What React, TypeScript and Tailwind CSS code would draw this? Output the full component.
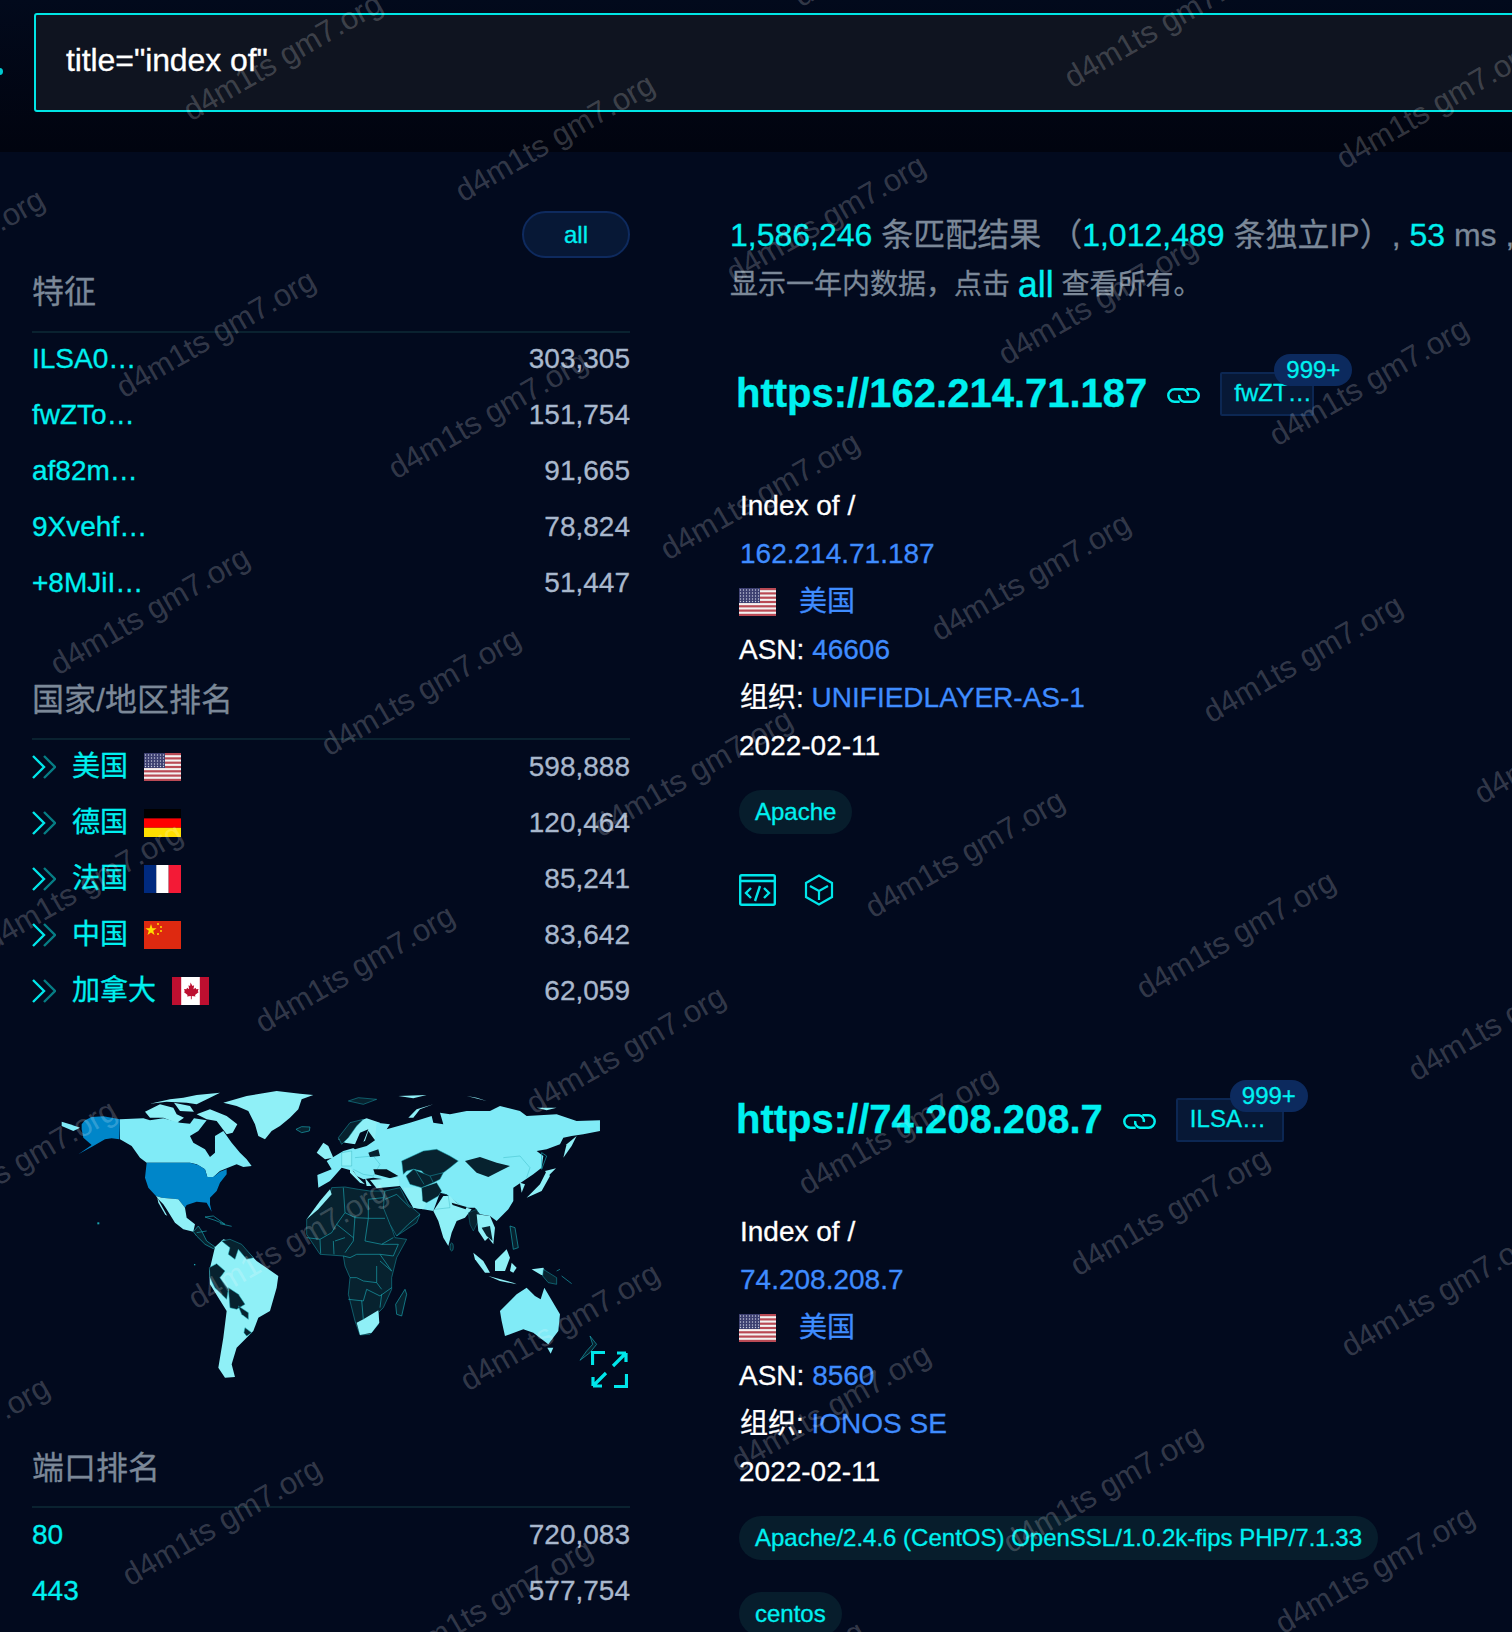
import React from "react";

const CY = "text-[#00f0f0]";

function Flag({ c }: { c: string }) {
  const cls = "w-[37px] h-[28px] shrink-0 block";
  if (c === "us")
    return (
      <svg viewBox="0 0 37 28" className={cls}>
        <rect width="37" height="28" fill="#f3f3f3" />
        {[0, 4.3, 8.6, 12.9, 17.2, 21.5, 25.8].map((y) => (
          <rect key={y} y={y} width="37" height="2.2" fill="#b94a55" />
        ))}
        <rect width="21" height="15" fill="#3c3f70" />
        {[2, 5, 8, 11, 14, 17, 20].map((x) =>
          [2, 5, 8, 11, 13.5].map((y) => <circle key={x + "-" + y} cx={x - 0.5} cy={y} r="0.7" fill="#c9cde0" />)
        )}
      </svg>
    );
  if (c === "de")
    return (
      <svg viewBox="0 0 37 28" className={cls}>
        <rect width="37" height="9.4" fill="#000" />
        <rect y="9.4" width="37" height="9.4" fill="#f00" />
        <rect y="18.8" width="37" height="9.2" fill="#ffdf00" />
      </svg>
    );
  if (c === "fr")
    return (
      <svg viewBox="0 0 37 28" className={cls}>
        <rect width="12.3" height="28" fill="#002a7f" />
        <rect x="12.3" width="12.4" height="28" fill="#fff" />
        <rect x="24.7" width="12.3" height="28" fill="#f31a36" />
      </svg>
    );
  if (c === "cn")
    return (
      <svg viewBox="0 0 37 28" className={cls}>
        <rect width="37" height="28" fill="#de2910" />
        <polygon points="7,3 8.4,7.2 12.6,7.2 9.2,9.8 10.5,14 7,11.4 3.5,14 4.8,9.8 1.4,7.2 5.6,7.2" fill="#ffde00" />
        <circle cx="14" cy="3" r="1" fill="#ffde00" />
        <circle cx="17" cy="6" r="1" fill="#ffde00" />
        <circle cx="17" cy="10" r="1" fill="#ffde00" />
        <circle cx="14" cy="13" r="1" fill="#ffde00" />
      </svg>
    );
  return (
    <svg viewBox="0 0 37 28" className={cls}>
      <rect width="37" height="28" fill="#fff" />
      <rect width="9.2" height="28" fill="#bd0f30" />
      <rect x="27.8" width="9.2" height="28" fill="#bd0f30" />
      <path d="M18.5 5.5l2 3.4 1.6-.6-.6 4 2-1.6.7 1.6 2.3-.3-.7 2.4 1 .6-3.8 3.1.5 1.5-3.7-.6-.1 3.2h-.8l-.1-3.2-3.7.6.5-1.5-3.8-3.1 1-.6-.7-2.4 2.3.3.7-1.6 2 1.6-.6-4 1.6.6z" fill="#bd0f30" />
    </svg>
  );
}

function Chevrons() {
  return (
    <svg viewBox="0 0 24 24" className="w-[24px] h-[24px] shrink-0 block" fill="none" strokeWidth="2.4">
      <path d="M1 1 L12 12 L1 23" stroke="#00e6ea" />
      <path d="M12 1 L23 12 L12 23" stroke="#067d84" />
    </svg>
  );
}

function LinkIcon() {
  return (
    <svg viewBox="0 0 34 20" className="w-[33px] h-[19px] block" fill="none" stroke="#00f0f0" strokeWidth="2.6">
      <path d="M13 16.500H7.500a6.500 6.500 0 0 1 0-13h9a6 6 0 0 1 5 7" />
      <path d="M20 3.500h6.500a6.500 6.500 0 0 1 0 13h-9a6 6 0 0 1-5-7" />
    </svg>
  );
}

function CodeIcon() {
  return (
    <svg viewBox="0 0 37 32" className="w-[37px] h-[32px] block" fill="none" stroke="#00e6ea" strokeWidth="2.4">
      <rect x="1.200" y="1.200" width="34.600" height="29.600" rx="1.500" />
      <path d="M1 7h35" />
      <path d="M12 14l-5 5 5 5M25 14l5 5-5 5M21 12l-5 15" />
    </svg>
  );
}

function CubeIcon() {
  return (
    <svg viewBox="0 0 30 32" className="w-[30px] h-[32px] block" fill="none" stroke="#00e6ea" strokeWidth="2.2">
      <path d="M15 1.500L28 9v14l-13 7.500L2 23V9z" />
      <path d="M6 12l9 5 9-5M15 17v9" />
    </svg>
  );
}

function ExpandIcon() {
  return (
    <svg viewBox="0 0 37 37" className="w-[37px] h-[37px] block" fill="none" stroke="#00e6ea" strokeWidth="3.2">
      <path d="M1.500 14V1.500H14M23 35.500h12.500V23" />
      <path d="M22 15L35 2M35 2h-9M35 2v9" />
      <path d="M15 22L2 35M2 35h9M2 35v-9" />
    </svg>
  );
}

const L1 = "#8ff0f7";
const L2 = "#80ebf7";
const DK = "#07222f";
const BD = "#1aa4b0";
const US = "#0086c9";

function P({ d, f = L1, s = "none", w = 0 }: { d: string; f?: string; s?: string; w?: number }) {
  return <path d={d} fill={f} stroke={s} strokeWidth={w} strokeLinejoin="round" />;
}

function WorldMap() {
  return (
    <svg viewBox="32 1070 598 320" className="w-[598px] h-[320px] block overflow-visible">
      <g transform="translate(50 1080) scale(0.3333)">
        <P f={L1} d="M285,92 L330,70 L370,80 L380,100 L402,110 L380,126 L340,110 L300,110Z" />
        <P f={L1} d="M300,68 L360,55 L400,50 L440,42 L510,35 L480,50 L440,70 L410,65 L350,62Z" />
        <P f={L1} d="M372,65 L420,75 L432,92 L390,90Z" />
        <P f={L1} d="M440,100 L480,85 L530,105 L562,130 L548,155 L530,160 L500,120 L470,115Z" />
        <P f={L2} d="M210,115 L280,112 L300,118 L340,112 L390,125 L420,128 L432,112 L470,118 L445,150 L420,165 L430,185 L465,205 L480,228 L495,215 L495,165 L520,150 L545,185 L570,215 L590,235 L605,255 L580,258 L560,250 L530,262 L510,270 L490,288 L472,288 L465,265 L440,250 L420,245 L290,245 L270,230 L245,195 L210,175Z" />
        <P f={L1} d="M520,65 L590,45 L680,30 L750,38 L790,42 L755,55 L745,85 L720,110 L690,135 L665,150 L645,175 L625,165 L615,130 L595,90 L560,75Z" />
        <P f={DK} s={BD} w={2} d="M738,145 L755,137 L780,138 L778,150 L755,155Z" />
        <P f={US} d="M290,245 L420,245 L445,252 L465,265 L472,288 L490,288 L510,272 L530,265 L530,280 L510,305 L500,330 L480,350 L480,370 L485,392 L470,365 L440,362 L410,372 L405,380 L385,355 L335,350 L318,345 L295,320 L285,290Z" />
        <P f={L2} d="M35,122 L60,130 L90,140 L70,150 L35,135Z" />
        <P f={US} d="M95,130 L105,118 L125,108 L160,106 L210,115 L208,175 L185,172 L165,175 L130,195 L85,220 L125,192 L100,170 L95,145Z" />
        <P f={L1} d="M318,345 L335,350 L385,355 L405,380 L410,410 L435,430 L430,452 L400,445 L375,425 L350,385 L340,370 L325,355Z" />
        <P f={L1} d="M322,350 L352,405 L345,400 L325,365Z" />
        <P f={DK} s={BD} w={2} d="M430,452 L445,435 L455,450 L470,480 L495,498 L490,503 L465,490 L440,465Z" />
        <P f="none" s={BD} w={2} d="M465,408 L490,405 L525,430 L495,418Z M510,428 L545,436 M440,455 L470,450" />
        <P f={L1} d="M495,498 L520,475 L570,490 L620,540 L685,585 L680,620 L660,690 L625,710 L610,750 L590,770 L560,800 L545,850 L555,888 L525,890 L505,860 L520,770 L530,690 L480,610 L478,570Z" />
        <P f={DK} s={BD} w={1.5} d="M515,480 L540,475 L575,490 L610,530 L590,535 L565,505 L555,535 L535,520 L540,500Z" />
        <P f={DK} s={BD} w={1.5} d="M478,560 L500,548 L525,570 L510,590 L535,625 L530,655 L495,620 L480,590Z" />
        <P f={DK} s={BD} w={1.5} d="M535,620 L565,640 L585,670 L560,685 L540,680Z" />
        <P f={DK} s={BD} w={1.5} d="M565,675 L595,695 L595,715 L575,700Z" />
        <P f={DK} s={BD} w={1.5} d="M585,740 L605,755 L590,765 L582,755Z" />
        <rect x="142" y="424" width="6" height="6" fill={BD} />
        <rect x="432" y="549" width="4" height="4" fill={BD} />
      </g>
      <g transform="translate(300 1080) scale(0.3333)">
        <P f={L1} d="M50,215 L70,185 L85,195 L100,230 L75,235Z" />
        <P f={L1} d="M115,175 L150,130 L200,112 L240,125 L230,170 L220,180 L185,195 L195,170 L205,145 L180,155 L165,190 L135,185Z" />
        <P f={DK} s={BD} w={1.5} d="M115,170 L150,125 L190,115 L170,135 L145,170 L125,190Z" />
        <P f={L2} d="M230,125 L270,130 L260,145 L330,125 L395,105 L400,125 L430,130 L420,95 L450,100 L500,90 L570,90 L600,75 L660,90 L680,105 L770,100 L830,120 L900,118 L900,150 L850,160 L815,165 L790,170 L780,190 L740,205 L710,210 L730,225 L725,260 L700,280 L670,300 L640,320 L640,360 L625,385 L590,420 L570,405 L540,400 L525,380 L495,380 L470,365 L440,340 L420,335 L400,390 L370,385 L340,380 L310,330 L290,300 L250,295 L220,290 L190,295 L170,285 L160,270 L125,260 L90,300 L55,320 L52,282 L95,265 L80,240 L130,210 L200,190 L225,175Z" />
        <P f={L1} d="M310,320 L370,318 L368,360 L380,365 L370,385 L340,380Z" />
        <P f={L1} d="M400,390 L430,345 L450,345 L470,365 L500,380 L515,385 L495,410 L470,420 L455,455 L445,495 L430,470 L415,420Z" />
        <P f="#04101c" d="M455,365 L500,378 L497,385 L458,372Z" />
        <P f={L1} d="M150,258 L175,290 L195,310 L180,305 L150,275Z" />
        <P f={L1} d="M195,290 L215,315 L200,315Z" />
        <P f={L1} d="M125,215 L155,210 L155,255 L125,255Z" />
        <P f="none" s={BD} w={1} d="M125,215 L155,210 L155,255 L125,255Z M165,230 L220,225 L240,250 L220,285 L190,280 L160,265 M610,230 L660,225 L690,260 L680,290 M425,335 L445,345 L450,380 L405,385" />
        <P f="#04101f" d="M150,195 L195,180 L205,150 L225,178 L200,195 L165,205Z" />
        <P f={DK} d="M205,215 L235,205 L240,225 L210,228Z" />
        <P f="#04101c" d="M220,265 L260,265 L295,285 L270,292 L225,280Z" />
        <P f={DK} s={BD} w={1.5} d="M305,240 L370,210 L410,205 L450,225 L475,240 L450,260 L430,275 L400,290 L390,300 L365,270 L340,265 L320,270 L310,280Z" />
        <P f={DK} d="M495,240 L540,228 L590,245 L630,255 L600,270 L565,288 L530,275Z" />
        <P f={DK} s={BD} w={1.5} d="M318,285 L340,265 L390,285 L430,275 L420,295 L400,305 L365,320 L330,310Z M345,265 L372,310 M390,285 L400,305" />
        <P f={DK} s={BD} w={1} d="M365,320 L410,305 L425,330 L415,345 L380,365 L368,360Z" />
        <P f={L1} d="M210,297 L295,290 L300,315 L230,322Z" />
        <P f={DK} s={BD} w={1.5} d="M95,320 L135,318 L175,325 L210,330 L255,330 L250,350 L262,405 L285,470 L320,475 L290,530 L275,590 L275,625 L250,680 L235,695 L235,730 L210,760 L180,762 L165,720 L145,640 L150,590 L135,555 L130,525 L60,520 L20,460 L20,415 L55,375 L90,340Z" />
        <P f={DK} s={BD} w={1.5} d="M255,330 L300,320 L325,370 L360,400 L350,425 L290,465 L270,430 L250,380Z" />
        <P f={L1} d="M20,415 L60,360 L90,325 L95,340 L55,385Z" />
        <P f={L1} d="M170,725 L190,715 L235,688 L238,725 L215,755 L180,762Z" />
        <path
          d="M130,320 L135,395 L165,410 L205,412 L205,355 M205,412 L255,412 M165,405 L160,480 L135,515 M205,412 L195,480 L245,490 L280,470 M110,430 L95,455 L60,475 L20,470 M110,430 L135,395 M110,430 L160,470 M130,525 L150,530 L170,520 L240,520 L275,570 L240,540 M150,590 L170,590 L190,600 L230,605 L230,555 M145,655 L190,660 L200,625 L240,645 L275,620 M230,605 L245,625 M185,658 L190,715 M245,640 L240,680 M240,520 L280,525 L295,490 L245,490 M60,475 L62,518 M100,480 L102,520 M135,470 L105,480 M255,355 L290,340 L330,380 M290,465 L325,430 L360,400 M205,355 L250,350"
          fill="none"
          stroke={BD}
          strokeWidth="2"
        />
        <P f={DK} s={BD} w={2} d="M315,625 L320,640 L305,705 L290,700 L287,670Z" />
        <ellipse cx="455" cy="498" rx="5" ry="12" fill={DK} stroke={BD} strokeWidth="1.5" />
        <P f={DK} s={BD} w={1} d="M505,395 L530,385 L540,410 L520,450 L510,430Z" />
        <P f={L1} d="M530,400 L570,405 L585,440 L580,490 L565,470 L555,480 L535,450Z" />
        <P f={DK} d="M545,440 L570,435 L578,480 L560,465Z" />
        <P f={L1} d="M520,515 L550,540 L570,575 L555,575 L525,535Z" />
        <P f={L1} d="M565,585 L640,605 L650,610 L600,600Z" />
        <P f={L1} d="M585,540 L620,505 L630,530 L615,570 L585,570Z" />
        <P f={L1} d="M635,545 L650,560 L640,575 L630,570Z" />
        <P f={DK} s={BD} w={2} d="M630,435 L645,440 L655,500 L640,505Z" />
        <P f={L1} d="M695,565 L730,560 L745,590 L720,580Z" />
        <P f={DK} s={BD} w={1.5} d="M730,565 L770,590 L770,610 L745,605 L728,585Z" />
        <path d="M770,570 L780,565 M785,585 L815,608" stroke={BD} strokeWidth="2" fill="none" />
        <P f={L1} d="M680,350 L720,310 L740,270 L750,285 L725,330Z" />
        <P f={L1} d="M735,270 L768,262 L745,285Z" />
        <P f={L1} d="M660,305 L675,310 L665,335Z" />
        <P f="none" s={BD} w={2} d="M725,215 L740,225 L725,265Z" />
        <P f={L1} d="M790,230 L800,190 L830,165 L815,195Z" />
        <P f={L1} d="M325,110 L350,85 L400,70 L360,85 L340,110Z" />
        <P f={DK} s={BD} w={1.5} d="M145,60 L175,50 L230,55 L190,70Z" />
        <P f={L1} d="M295,45 L380,42 L340,52Z" />
        <P f={L1} d="M500,45 L560,60 L530,50Z" />
        <P f={L1} d="M710,80 L770,80 L740,88Z" />
        <P f={L2} d="M600,690 L650,640 L680,620 L705,645 L722,655 L733,620 L780,700 L775,750 L745,790 L700,755 L670,745 L615,765 L605,720Z" />
        <P f={L2} d="M742,800 L760,800 L752,818Z" />
        <P f={DK} s={BD} w={2} d="M870,765 L890,790 L870,815 L840,838 L860,810 L878,790Z" />
      </g>
    </svg>
  );
}

function SectionHead({ t, className }: { t: string; className: string }) {
  return <div className={"text-[32px] leading-[44px] text-[#7b8898] " + className}>{t}</div>;
}

function NameRow({ name, n }: { name: string; n: string }) {
  return (
    <div className="flex justify-between items-center h-[56px] text-[28px]">
      <span className={CY}>{name}</span>
      <span className="text-[#a9b8cd]">{n}</span>
    </div>
  );
}

function CountryRow({ name, c, n }: { name: string; c: string; n: string }) {
  return (
    <div className="flex justify-between items-center h-[56px] text-[28px]">
      <div className="flex items-center">
        <Chevrons />
        <span className={CY + " ml-[16px]"}>{name}</span>
        <span className="ml-[16px]">
          <Flag c={c} />
        </span>
      </div>
      <span className="text-[#a9b8cd]">{n}</span>
    </div>
  );
}

function Pill({ t }: { t: string }) {
  return (
    <div className={"inline-flex items-center h-[44px] rounded-[22px] bg-[#071d2c] px-[16px] text-[24px] whitespace-nowrap " + CY}>
      {t}
    </div>
  );
}

function Result({
  url,
  tag,
  ip,
  asn,
  org,
  children,
  tagW,
}: {
  url: string;
  tag: string;
  ip: string;
  asn: string;
  org: string;
  tagW: string;
  children: React.ReactNode;
}) {
  const link = "text-[#3f8cff]";
  return (
    <div>
      <div className="flex items-center h-[48px] pl-[6px]">
        <span className={"text-[40px] font-bold whitespace-nowrap " + CY}>{url}</span>
        <span className="ml-[20px] mt-[4px]">
          <LinkIcon />
        </span>
        <div className="relative ml-[20px] mt-[2px]">
          <div className={"flex items-center h-[44px] rounded-[2px] border-2 border-[#0c2753] bg-[#071836] pl-[12px] pb-[2px] text-[24px] " + tagW + " " + CY}>
            {tag}
          </div>
          <div className={"absolute left-[54px] -top-[18px] flex items-center justify-center w-[78px] h-[32px] rounded-[16px] bg-[#0c2a5e] text-[24px] " + CY}>
            999+
          </div>
        </div>
      </div>
      <div className="mt-[65px] pl-[9px] text-[28px] text-white">
        <div className="h-[48px] flex items-center pl-[1px]">Index of /</div>
        <div className={"h-[48px] flex items-center pl-[1px] " + link}>{ip}</div>
        <div className={"h-[48px] flex items-center " + link}>
          <Flag c="us" />
          <span className="ml-[23px]">美国</span>
        </div>
        <div className="h-[48px] flex items-center whitespace-pre">
          ASN: <span className={link}>{asn}</span>
        </div>
        <div className="h-[48px] flex items-center pl-[1px] whitespace-pre">
          组织: <span className={link}>{org}</span>
        </div>
        <div className="h-[48px] flex items-center">2022-02-11</div>
        {children}
      </div>
    </div>
  );
}

function Watermarks() {
  const items: { x: number; y: number }[] = [];
  for (let r = -2; r <= 7; r++) {
    for (let k = -3; k <= 8; k++) {
      const x = 283 + k * 271.6 - r * 66.6;
      const y = 57 + k * 81.2 + r * 276.8;
      if (x > -200 && x < 1720 && y > -120 && y < 1760) items.push({ x, y });
    }
  }
  return (
    <div className="absolute inset-0 overflow-hidden pointer-events-none [-webkit-text-stroke:0]">
      {items.map((p, i) => (
        <div
          key={i}
          className="absolute w-[300px] h-[40px] -ml-[150px] -mt-[20px] flex items-center justify-center text-[31px] leading-[40px] text-white/20 -rotate-[30deg] whitespace-nowrap"
          style={{ left: p.x, top: p.y }}
        >
          d4m1ts gm7.org
        </div>
      ))}
    </div>
  );
}

export default function App() {
  return (
    <div className="relative w-[1512px] h-[1632px] overflow-hidden bg-[#020a1e] [-webkit-text-stroke:0.3px] [font-family:'Liberation_Sans','Noto_Sans_CJK_SC',sans-serif]">
      <header className="relative h-[152px] bg-linear-to-b from-[#020a1c] to-[#01040f] pt-[13px] pl-[34px]">
        <div className="absolute -left-[4px] top-[68px] w-[7px] h-[7px] rounded-full bg-[#00c8d0]" />
        <div className="flex items-center w-[1600px] h-[99px] rounded-[3px] border-2 border-[#00e6e6] bg-[#0f1420] pl-[30px] pb-[6px] text-[32px] tracking-[-0.1px] text-white">
          title="index of"
        </div>
      </header>
      <main className="flex">
        <aside className="w-[598px] ml-[32px] shrink-0">
          <div className="flex justify-end pt-[59px]">
            <div className={"flex items-center justify-center w-[108px] h-[47px] rounded-[24px] border-2 border-[#0e2a5e] bg-[#071836] text-[24px] " + CY}>
              all
            </div>
          </div>
          <SectionHead t="特征" className="mt-[12px] pb-[17px] border-b-2 border-[#0a2230]" />
          <div className="-mt-[2px]">
            <NameRow name="ILSA0…" n="303,305" />
            <NameRow name="fwZTo…" n="151,754" />
            <NameRow name="af82m…" n="91,665" />
            <NameRow name="9Xvehf…" n="78,824" />
            <NameRow name="+8MJiI…" n="51,447" />
          </div>
          <SectionHead t="国家/地区排名" className="mt-[67px] pb-[16px] border-b-2 border-[#0a2230]" />
          <div className="-mt-[1px]">
            <CountryRow name="美国" c="us" n="598,888" />
            <CountryRow name="德国" c="de" n="120,464" />
            <CountryRow name="法国" c="fr" n="85,241" />
            <CountryRow name="中国" c="cn" n="83,642" />
            <CountryRow name="加拿大" c="ca" n="62,059" />
          </div>
          <div className="relative mt-[52px]">
            <WorldMap />
            <div className="absolute right-[2px] top-[280px]">
              <ExpandIcon />
            </div>
          </div>
          <SectionHead t="端口排名" className="mt-[55px] pb-[16px] border-b-2 border-[#0a2230]" />
          <div className="-mt-[1px]">
            <NameRow name="80" n="720,083" />
            <NameRow name="443" n="577,754" />
          </div>
        </aside>
        <section className="ml-[100px] shrink-0 w-[900px]">
          <div className="pt-[59px] whitespace-nowrap">
            <div className="h-[48px] flex items-center text-[32px] text-[#7b8898] whitespace-pre">
              <span className={CY}>1,586,246</span>
              <span> 条匹配结果 （</span>
              <span className={CY}>1,012,489</span>
              <span> 条独立IP）, </span>
              <span className={CY}>53</span>
              <span> ms ,</span>
            </div>
            <div className="h-[52px] flex items-center text-[28px] text-[#7b8898] whitespace-pre">
              <span>显示一年内数据，点击 </span>
              <span className={"text-[36px] " + CY}>all</span>
              <span> 查看所有。</span>
            </div>
          </div>
          <div className="mt-[58px]">
            <Result url="https://162.214.71.187" tag="fwZT…" ip="162.214.71.187" asn="46606" org="UNIFIEDLAYER-AS-1" tagW="w-[94px]">
              <div className="mt-[20px]">
                <Pill t="Apache" />
              </div>
              <div className="mt-[40px] flex items-center gap-[28px]">
                <CodeIcon />
                <CubeIcon />
              </div>
            </Result>
          </div>
          <div className="mt-[189px]">
            <Result url="https://74.208.208.7" tag="ILSA…" ip="74.208.208.7" asn="8560" org="IONOS SE" tagW="w-[108px]">
              <div className="mt-[20px]">
                <Pill t="Apache/2.4.6 (CentOS) OpenSSL/1.0.2k-fips PHP/7.1.33" />
              </div>
              <div className="mt-[32px]">
                <Pill t="centos" />
              </div>
            </Result>
          </div>
        </section>
      </main>
      <Watermarks />
    </div>
  );
}
